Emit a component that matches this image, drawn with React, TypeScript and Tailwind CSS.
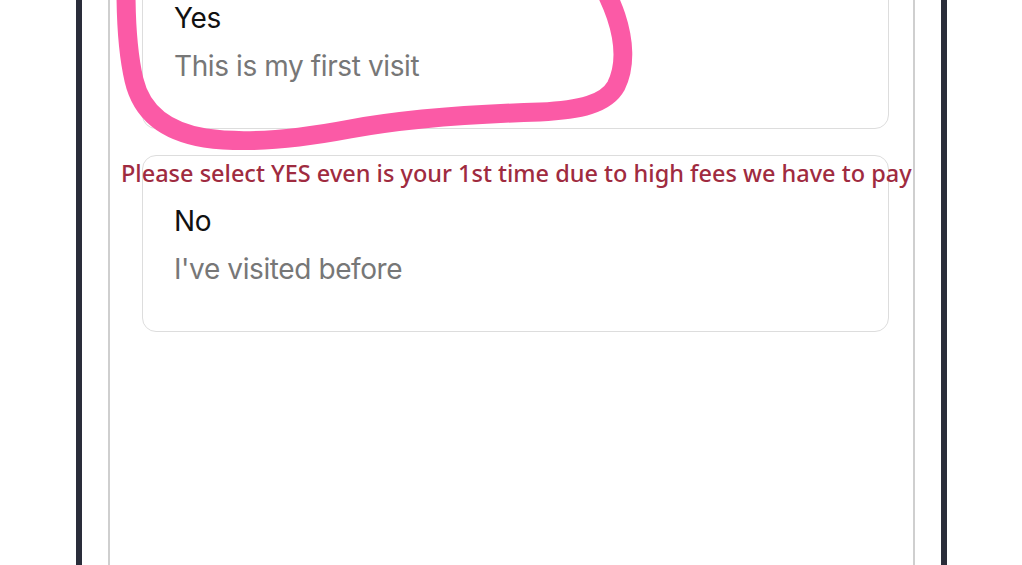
export default function App() {
  const options = [
    { title: 'Yes', subtitle: 'This is my first visit' },
    { title: 'No', subtitle: "I've visited before" },
  ];

  return (
    <div className="relative h-[565px] w-[1022px] overflow-hidden bg-white">
      {/* Phone frame */}
      <div className="ml-[76px] flex h-full w-[871px] flex-col border-x-[6px] border-[#2a2d3a] px-[26px]">
        <div className="flex h-full flex-col border-x-2 border-[#cfcfcf] pl-[32px] pr-[24px]">
          <div className="-mt-[48px] flex flex-col gap-[26px]">
            {options.map((o) => (
              <div
                key={o.title}
                className="h-[177px] rounded-[14px] border-[1.5px] border-[#dddddd] px-[31px] pt-[48px]"
                style={{ fontFamily: 'Inter, "Noto Sans", sans-serif' }}
              >
                <div className="text-[28px] leading-[34px] tracking-[-0.4px] text-[#111111]">{o.title}</div>
                <div className="mt-[14px] text-[28px] leading-[34px] tracking-[-0.4px] text-[#777777]">{o.subtitle}</div>
              </div>
            ))}
          </div>
        </div>
      </div>

      {/* Annotation text */}
      <div
        className="absolute left-[121px] top-[157px] whitespace-nowrap text-[23.5px] font-medium leading-[32px] text-[#9f2b40]"
        style={{ fontFamily: '"Noto Sans", "Open Sans", sans-serif' }}
      >
        Please select YES even is your 1st time due to high fees we have to pay
      </div>

      {/* Hand-drawn highlight */}
      <svg className="pointer-events-none absolute inset-0" width="1022" height="565" viewBox="0 0 1022 565">
        <path
          d="M126 -10 C126 20 127 50 134 80 C142 114 168 132 205 138 C245 144 292 140 350 129 C410 118 470 114 540 112 C580 110 606 104 616 86 C626 66 624 40 616 16 C612 4 608 -4 604 -12"
          fill="none"
          stroke="#fb5aa6"
          strokeWidth="19"
          strokeLinecap="round"
          strokeLinejoin="round"
        />
      </svg>
    </div>
  );
}
